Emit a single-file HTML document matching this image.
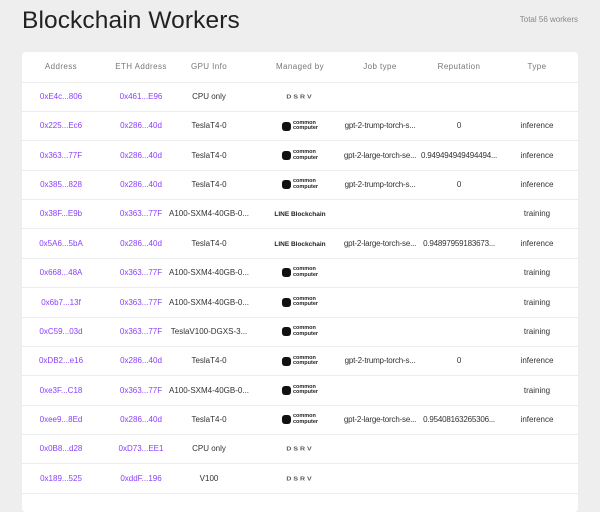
<!DOCTYPE html>
<html><head><meta charset="utf-8"><style>
body{margin:0;width:600px;height:489px;background:#eeeeee;font-family:"Liberation Sans",sans-serif;overflow:hidden;position:relative}
h1{position:absolute;left:22px;top:7px;margin:0;font-weight:400;font-size:24.5px;color:#222;letter-spacing:0.1px}
.total{position:absolute;right:22px;top:15px;font-size:8px;color:#888}
.card{position:absolute;left:22px;top:52px;width:556px;height:460px;background:#fff;border-radius:4px}
.row{position:absolute;left:0;width:556px;height:29px;border-bottom:1px solid #ececec}
.c{position:absolute;top:0;height:29px;line-height:29px;text-align:center;font-size:8px;color:#333;white-space:nowrap;transform:translateX(-50%)}
.hd .c{color:#777;letter-spacing:0.4px}
.a{color:#8a3ffc}
.r{letter-spacing:-0.2px}
.dsrv{font-weight:700;font-size:7px;letter-spacing:2px;color:#555;font-family:"Liberation Sans",sans-serif;display:inline-block;transform:scaleY(0.75)}
.cc{display:inline-flex;align-items:center;gap:2px;line-height:6px;vertical-align:middle}
.cc i{width:9px;height:9px;background:#111;border-radius:3px;display:inline-block}
.cc span{font-size:5.5px;font-weight:700;color:#222;text-align:left;line-height:5.5px}
.line{font-size:6.5px;font-weight:700;color:#222}
</style></head><body>
<h1>Blockchain Workers</h1>
<div class="total">Total 56 workers</div>
<div class="card" id="card"></div>
<script>
var X=[39,119,187,278,358,437,515];
var cc='<span class="cc"><i></i><span>common<br>computer</span></span>';
var ds='<span class="dsrv">DSRV</span>';
var ln='<span class="line">LINE Blockchain</span>';
var rows=[
['0xE4c...806','0x461...E96','CPU only',ds,'','',''],
['0x225...Ec6','0x286...40d','TeslaT4-0',cc,'gpt-2-trump-torch-s...','0','inference'],
['0x363...77F','0x286...40d','TeslaT4-0',cc,'gpt-2-large-torch-se...','0.949494949494494...','inference'],
['0x385...828','0x286...40d','TeslaT4-0',cc,'gpt-2-trump-torch-s...','0','inference'],
['0x38F...E9b','0x363...77F','A100-SXM4-40GB-0...',ln,'','','training'],
['0x5A6...5bA','0x286...40d','TeslaT4-0',ln,'gpt-2-large-torch-se...','0.94897959183673...','inference'],
['0x668...48A','0x363...77F','A100-SXM4-40GB-0...',cc,'','','training'],
['0x6b7...13f','0x363...77F','A100-SXM4-40GB-0...',cc,'','','training'],
['0xC59...03d','0x363...77F','TeslaV100-DGXS-3...',cc,'','','training'],
['0xDB2...e16','0x286...40d','TeslaT4-0',cc,'gpt-2-trump-torch-s...','0','inference'],
['0xe3F...C18','0x363...77F','A100-SXM4-40GB-0...',cc,'','','training'],
['0xee9...8Ed','0x286...40d','TeslaT4-0',cc,'gpt-2-large-torch-se...','0.95408163265306...','inference'],
['0x0B8...d28','0xD73...EE1','CPU only',ds,'','',''],
['0x189...525','0xddF...196','V100',ds,'','','']];
var h='<div class="row hd" style="top:0;height:30px">';
['Address','ETH Address','GPU Info','Managed by','Job type','Reputation','Type'].forEach(function(t,i){h+='<div class="c" style="left:'+X[i]+'px;height:30px;line-height:30px">'+t+'</div>'});
h+='</div>';
rows.forEach(function(r,j){h+='<div class="row" style="top:'+(30+j*29.35).toFixed(1)+'px">';r.forEach(function(t,i){h+='<div class="c'+(i<2?' a':'')+(i==4||i==5?' r':'')+'" style="left:'+X[i]+'px">'+t+'</div>'});h+='</div>'});
document.getElementById('card').innerHTML=h;
</script>
</body></html>
